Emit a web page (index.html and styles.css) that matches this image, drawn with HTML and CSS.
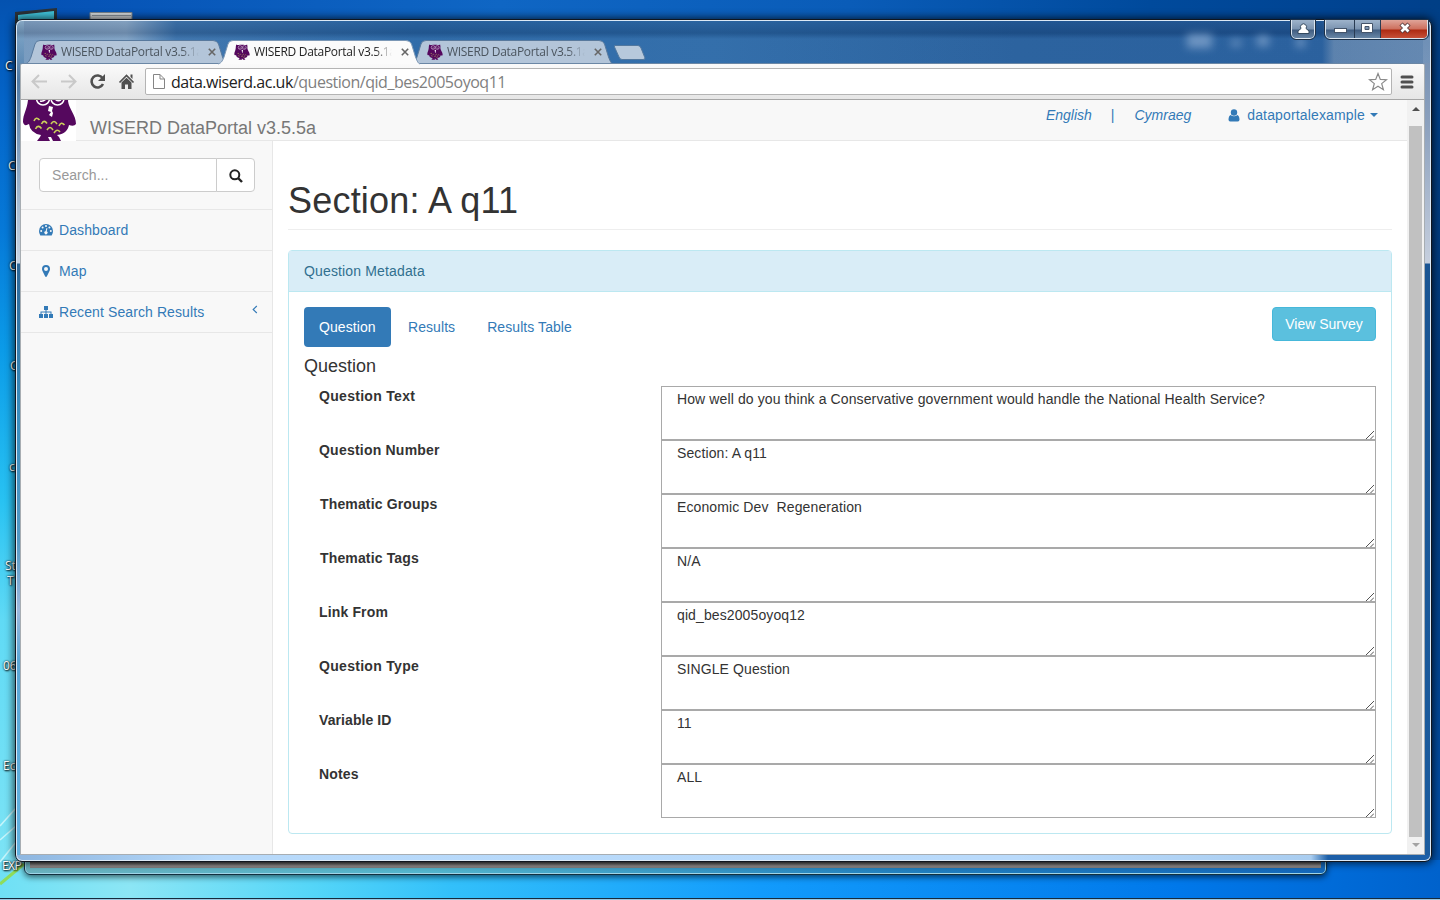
FILE: index.html
```html
<!DOCTYPE html>
<html lang="en">
<head>
<meta charset="utf-8">
<title>WISERD DataPortal</title>
<link rel="stylesheet" href="styles.css">
</head>
<body>
<svg width="0" height="0" class="defs">
  <symbol id="owl" viewBox="0 0 55 54">
    <path fill="#55085e" d="M8 1Q14 5 20 2H33Q40 5 45 1Q47 7 46 14C47 22 54 28 54 37Q52 40 47 38C46 43 43 47 35 48L37 50L39 54H31L29 50H26L28 54H15L18 50L19 48Q8 46 7 37Q2 40 1 35C1 27 5 23 6 13Q6 6 8 1Z"/>
    <g fill="none" stroke="#fff" stroke-width="1.5"><circle cx="21" cy="11.500" r="6.500"/><circle cx="35.500" cy="11.500" r="6.500"/><path d="M18 14Q21 15 24 12M33 12Q36 15 39 13"/></g>
    <path fill="#fff" d="M27 19L31 20L30 24L31 26L30 30L27 28L29 25L26 24Z"/>
    <path fill="none" stroke="#cbd05a" stroke-width="1.600" d="M12 34Q14 29 17.500 33M19.500 37Q22 32 25 36.500M29 37Q32 32 35 37M37 39Q39 34 42.500 38M13.500 42Q16 37 19.500 41.500M25 43Q28 38 31 43M32 46Q35 41 38 45"/>
  </symbol>
  <symbol id="close" viewBox="0 0 8 8"><path d="M.8.8L7.2 7.2M7.2.8L.8 7.2" stroke="currentColor" stroke-width="1.6"/></symbol>
</svg>
<div class="desktop">
  <svg class="wallpaper" width="1440" height="900">
    <path d="M0 884Q12 874 24 864" stroke="#8fdc5a" stroke-width="3" fill="none"/>
    <path d="M0 826L16 808M0 840L16 826M0 862L16 842" stroke="#c5f5fb" stroke-width="1.5"/>
    <path d="M15 12L57 8V24H15Z" fill="#2b3238"/><path d="M18 15L54 11V24H18Z" fill="#40c4dc"/>
    <path d="M90 12.500H132V24H90Z" fill="#d5d9dc" stroke="#77828c"/><path d="M92 15.500H131" stroke="#8c959e"/>
  </svg>
  <div class="icon-label l1">C</div><div class="icon-label l2">C</div><div class="icon-label l3">C</div><div class="icon-label l4">C</div>
  <div class="icon-label l5">c</div><div class="icon-label l6">St</div><div class="icon-label l7">T</div><div class="icon-label l8">06</div><div class="icon-label l9">Ec</div><div class="icon-label l10">EXP</div>
  <div class="back-window"><div class="back-client"></div></div>

  <div class="window">
    <div class="glow"></div>
    <div class="ghost g1"></div><div class="ghost g2"></div><div class="ghost g3"></div><div class="ghost g4"></div>
    <div class="caption user"><svg width="25" height="18"><path d="M7 14.5V12L10 9.5A3 3 0 1 1 15 9.5L18 12V14.5Z" fill="#fff" stroke="#34495f" stroke-width="1"/></svg></div>
    <div class="caption controls">
      <span class="cap"><svg width="28" height="18"><rect x="8.500" y="9.500" width="12" height="4" fill="#fff" stroke="#44546a"/></svg></span>
      <span class="cap"><svg width="25" height="18"><path d="M6.500 4.500h11v9h-11zM10 7.500v3h4v-3z" fill="#fff" fill-rule="evenodd" stroke="#44546a"/></svg></span>
      <span class="cap red"><svg width="47" height="18"><path d="M20 5L28 13M28 5L20 13" stroke="#55393c" stroke-width="4.500"/><path d="M20.500 5.500L27.500 12.500M27.500 5.500L20.500 12.500" stroke="#fff" stroke-width="2.800"/></svg></span>
    </div>
    <div class="tabs">
      <div class="tab"><svg class="shape" width="198" height="24"><path d="M-2 24C1 23 2 22 4 17L8 4Q9 .5 13 .5H186Q190 .5 191.500 4L195.500 17C197.500 22 198 23 200 24"/></svg><svg class="fav" width="16" height="16"><use href="#owl"/></svg><span class="tab-title">WISERD DataPortal v3.5.1a</span><svg class="x" width="8" height="8"><use href="#close"/></svg></div>
      <div class="tab active"><svg class="shape" width="198" height="24"><path d="M-2 24C1 23 2 22 4 17L8 4Q9 .5 13 .5H186Q190 .5 191.500 4L195.500 17C197.500 22 198 23 200 24"/></svg><svg class="fav" width="16" height="16"><use href="#owl"/></svg><span class="tab-title">WISERD DataPortal v3.5.1a</span><svg class="x" width="8" height="8"><use href="#close"/></svg></div>
      <div class="tab"><svg class="shape" width="198" height="24"><path d="M-2 24C1 23 2 22 4 17L8 4Q9 .5 13 .5H186Q190 .5 191.500 4L195.500 17C197.500 22 198 23 200 24"/></svg><svg class="fav" width="16" height="16"><use href="#owl"/></svg><span class="tab-title">WISERD DataPortal v3.5.1a</span><svg class="x" width="8" height="8"><use href="#close"/></svg></div>
      <svg class="newtab" width="32" height="16"><path d="M1 .5H24Q26 .5 27 3L31 13Q31 14.500 29 14.500H8Q6 14.500 5 12L.5 2Q0 .5 1 .5Z" fill="#b7c9dc" stroke="#52789f"/></svg>
    </div>
    <div class="client">
      <div class="toolbar">
        <svg class="nav-icons" width="124" height="36" fill="none">
          <path d="M26 17.500H12M18 11L11.500 17.500L18 24M40 17.500H54M48 11L54.500 17.500L48 24" stroke="#c9c9c9" stroke-width="2"/>
          <path d="M81.500 14A6 6 0 1 0 82 20" stroke="#505050" stroke-width="2.600"/><path d="M84 10V17H77Z" fill="#505050"/>
          <path d="M98.500 18.500L105.500 11.500L112.500 18.500" stroke="#505050" stroke-width="1.700"/><path d="M109.500 10.500H111.500V15L109.500 13Z" fill="#505050"/><path d="M100.500 18.500L105.500 13.700L110.500 18.500V25H107V20.500H104V25H100.500Z" fill="#505050"/>
        </svg>
        <div class="omnibox">
          <svg width="14" height="16" fill="#fff" stroke="#858585"><path d="M1.500.5H8L12.500 5V14.500H1.500ZM8 .5V5H12.500"/></svg>
          <span class="url">data.wiserd.ac.uk<i>/question/qid_bes2005oyoq11</i></span>
          <svg class="star" width="20" height="20" fill="#fff" stroke="#8a8a8a" stroke-width="1.200"><path d="M10 1.500L12.300 7.400L18.500 7.700L13.700 11.600L15.400 17.700L10 14.200L4.600 17.700L6.300 11.600L1.500 7.700L7.700 7.400Z"/></svg>
        </div>
        <svg class="menu" width="14" height="14" stroke="#505050" stroke-width="3" stroke-linecap="round"><path d="M2 2H12M2 7H12M2 12H12"/></svg>
      </div>
      <div class="viewport">
        <div class="page">
          <header class="navbar">
            <div class="logo"><svg width="55" height="54"><use href="#owl"/></svg></div>
            <span class="brand">WISERD DataPortal v3.5.5a</span>
            <nav class="toplinks">
              <em>English</em><span class="bar">|</span><em>Cymraeg</em>
              <svg class="person" width="12" height="13" fill="#337ab7"><circle cx="6" cy="3.500" r="3.200"/><path d="M2.500 6Q6 8.500 9.500 6Q11.500 7 11.500 11Q11 12.500 9.500 12.500H2.500Q1 12.500 .5 11Q.5 7 2.500 6Z"/></svg>
              <span class="account">dataportalexample</span><span class="caret"></span>
            </nav>
          </header>
          <div class="body">
            <aside class="sidebar">
              <div class="search"><div class="field">Search...</div><div class="go"><svg width="14" height="14" fill="none" stroke="#222"><circle cx="5.800" cy="5.800" r="4.500" stroke-width="2"/><path d="M9 9L13 13" stroke-width="2.400"/></svg></div></div>
              <a class="item"><svg width="14" height="14" viewBox="0 0 14 14"><path fill="#337ab7" d="M0 8A7 7 0 0 1 14 8Q14 10.500 12.700 12.500H1.300Q0 10.500 0 8Z"/><g fill="#f8f8f8"><circle cx="2.200" cy="8" r="1"/><circle cx="3.600" cy="4.600" r="1"/><circle cx="7" cy="3.100" r="1"/><circle cx="10.400" cy="4.600" r="1"/><circle cx="11.800" cy="8" r="1"/><path d="M7.500 5L8.400 5.300L7.700 8.300A1.600 1.600 0 1 1 6.600 8.200Z"/></g></svg><span>Dashboard</span></a>
              <a class="item"><svg width="14" height="14" viewBox="0 0 14 14"><path fill="#337ab7" fill-rule="evenodd" d="M7 1A4 4 0 0 1 11 5Q11 6 10.500 7L7.800 12.600Q7 13.500 6.200 12.600L3.500 7Q3 6 3 5A4 4 0 0 1 7 1ZM7 3A2 2 0 1 0 7 7A2 2 0 1 0 7 3Z"/></svg><span>Map</span></a>
              <a class="item"><svg width="14" height="14" viewBox="0 0 14 14"><path fill="#337ab7" d="M5 1H9V5H7.500V6.500H12.500V9H14V13H10V9H11.500V7.500H7.500V9H9V13H5V9H6.500V7.500H2.500V9H4V13H0V9H1.500V6.500H6.500V5H5Z"/></svg><span>Recent Search Results</span><svg class="chev" width="6" height="9" fill="none" stroke="#337ab7" stroke-width="1.200"><path d="M4.800 1L1.200 4.500L4.800 8"/></svg></a>
            </aside>
            <main class="main">
              <h1>Section: A q11</h1>
              <section class="panel">
                <div class="panel-heading">Question Metadata</div>
                <div class="panel-body">
                  <div class="pills"><span class="pill on">Question</span><span class="pill">Results</span><span class="pill">Results Table</span><span class="btn">View Survey</span></div>
                  <h4>Question</h4>
                  <div class="row"><b class="k1">Question Text</b><div class="area"><span>How well do you think a Conservative government would handle the National Health Service?</span><svg class="grip" width="8" height="8"><path d="M0 8L8 0M4.500 8L8 4.500"/></svg></div></div>
                  <div class="row"><b class="k2">Question Number</b><div class="area"><span>Section: A q11</span><svg class="grip" width="8" height="8"><path d="M0 8L8 0M4.500 8L8 4.500"/></svg></div></div>
                  <div class="row"><b class="k3">Thematic Groups</b><div class="area"><span>Economic Dev&nbsp; Regeneration</span><svg class="grip" width="8" height="8"><path d="M0 8L8 0M4.500 8L8 4.500"/></svg></div></div>
                  <div class="row"><b class="k3">Thematic Tags</b><div class="area"><span>N/A</span><svg class="grip" width="8" height="8"><path d="M0 8L8 0M4.500 8L8 4.500"/></svg></div></div>
                  <div class="row"><b>Link From</b><div class="area"><span>qid_bes2005oyoq12</span><svg class="grip" width="8" height="8"><path d="M0 8L8 0M4.500 8L8 4.500"/></svg></div></div>
                  <div class="row"><b class="k1">Question Type</b><div class="area"><span>SINGLE Question</span><svg class="grip" width="8" height="8"><path d="M0 8L8 0M4.500 8L8 4.500"/></svg></div></div>
                  <div class="row"><b class="k4">Variable ID</b><div class="area"><span>11</span><svg class="grip" width="8" height="8"><path d="M0 8L8 0M4.500 8L8 4.500"/></svg></div></div>
                  <div class="row"><b>Notes</b><div class="area"><span>ALL</span><svg class="grip" width="8" height="8"><path d="M0 8L8 0M4.500 8L8 4.500"/></svg></div></div>
                </div>
              </section>
            </main>
          </div>
        </div>
        <div class="scrollbar"><span class="up"></span><span class="thumb"></span><span class="down"></span></div>
      </div>
    </div>
  </div>
  <div class="taskbar"></div>
</div>
</body>
</html>
```
FILE: styles.css
```css
* { box-sizing: border-box; }
body { margin: 0; font: 14px/20px "Liberation Sans", Arial, sans-serif; color: #333; }
svg { display: block; flex: none; }
.defs { position: absolute; }
.desktop {
  position: relative; width: 1440px; height: 900px; overflow: hidden;
  background:
    linear-gradient(90deg, #6fe0f5 0, #8ce6f5 130px, #55d6f8 310px, #33c0fa 450px, #129bfc 760px, #0078ea 1180px, #0062cc 1440px) 0 860px / 1440px 40px no-repeat,
    linear-gradient(#0452b0 0, #0464c8 100px, #0679d8 230px, #0b9be8 350px, #28c2f2 500px, #60daf5 620px, #7ce3f5 860px) 0 0 / 30px 860px no-repeat,
    linear-gradient(#003f86 0, #003a7c 450px, #0052ae 900px) 1420px 0 / 20px 860px no-repeat,
    linear-gradient(90deg, #0450b4, #0f66c4 500px, #0a5cb8 850px, #004a9c 1150px, #00408c 1440px);
}
.wallpaper { position: absolute; left: 0; top: 0; }
.icon-label { position: absolute; font: 12px/14px "Open Sans", sans-serif; color: #fff; text-shadow: 1px 1px 2px #000, 0 0 2px #000; }
.l1 { left: 5px; top: 59px; } .l2 { left: 8px; top: 159px; } .l3 { left: 9px; top: 259px; } .l4 { left: 10px; top: 359px; }
.l5 { left: 9px; top: 460px; } .l6 { left: 5px; top: 559px; } .l7 { left: 7px; top: 574px; } .l8 { left: 3px; top: 659px; }
.l9 { left: 3px; top: 759px; } .l10 { left: 2px; top: 859px; letter-spacing: -.6px; }
.back-window {
  position: absolute; left: 24px; top: 830px; width: 1303px; height: 45px; padding: 0 5px 6px;
  border: 1px solid #12303f; border-radius: 0 0 6px 6px; box-shadow: inset 0 0 0 1px #9fd4e6, 0 2px 6px rgba(0,0,0,.6);
  background: linear-gradient(90deg, #6bb3c0, #54b7cf 400px, #207fc0 900px, #1469bd);
}
.back-client { height: 100%; background: linear-gradient(#4c4c4c 31px, #979292 35px, #837f7f); }
.window {
  position: absolute; left: 15px; top: 19px; width: 1417px; height: 843px; padding: 0 6px 6px;
  border: 1px solid #10161f; border-radius: 7px;
  box-shadow: inset 0 0 0 1px #dce9f6, 0 0 9px 1px rgba(0,0,0,.75);
  background:
    linear-gradient(90deg, #8db6e0, #b7d9fa 200px, #b9dafb 1000px, #a9cdf0 1295px, #1c5fa8 1312px) 0 835px / 1417px 7px no-repeat,
    linear-gradient(#8fb0cc 0, #4f7aa5 60px, #a9bed4 190px, #c8d4e2 243px, #2e6898 244px, #3b8fc0 400px, #5298c4 520px, #9db8dc 590px, #5aa6d6 640px, #63b2e0) 0 0 / 8px 843px no-repeat,
    linear-gradient(#6d8bb0 0, #8ba0bd 100px, #c6cfde 243px, #1a5593 244px, #1b5c9f) 1407px 0 / 8px 843px no-repeat,
    linear-gradient(90deg, #7e9cbd 0, #8aa7c5 110px, #3d72aa 160px, #2a65a3 400px, #2d68a5 700px, #245a97 1000px, #235896 1306px, #5d7fa8 1318px, #6887ad 1417px);
}
.glow { position: absolute; left: 1px; right: 1px; top: 1px; height: 42px; border-radius: 6px 6px 0 0; background: linear-gradient(rgba(0,30,70,.05), rgba(0,30,70,.22) 12px, rgba(90,150,205,.15) 18px, rgba(90,150,205,.15)); }
.ghost { position: absolute; background: #86a7cf; filter: blur(4px); opacity: .75; }
.g1 { left: 1171px; top: 14px; width: 25px; height: 14px; } .g2 { left: 1215px; top: 20px; width: 10px; height: 6px; }
.g3 { left: 1241px; top: 16px; width: 12px; height: 10px; } .g4 { left: 1280px; top: 18px; width: 9px; height: 9px; }
.caption { position: absolute; top: 0; display: flex; height: 19px; border: 1px solid #dbe5ef; border-top: 0; border-radius: 0 0 5px 5px; overflow: hidden; outline: 1px solid #1c3048; background: linear-gradient(#9eb3cb, #7a93b0 9px, #405c80 10px, #6886a6); }
.caption svg { margin-top: -1px; }
.user { left: 1275px; width: 24px; } .user svg { margin-left: -1px; }
.controls { left: 1309px; width: 103px; }
.cap { border-right: 1px solid #293b52; display: flex; justify-content: center; }
.cap.red { flex: 1; border: 0; background: linear-gradient(#dfa499, #cd6f5d 9px, #ad2a12 10px, #c65038); }
.tabs { height: 44px; padding: 20px 0 0 5px; display: flex; position: relative; }
.tab { position: relative; width: 193px; height: 24px; display: flex; align-items: center; padding: 0 0 1px 14px; font: 12px/16px "Open Sans", sans-serif; color: #4b555f; }
.shape { position: absolute; left: 0; top: 0; overflow: visible; fill: #b3c5d9; stroke: #58799d; }
.active { z-index: 2; color: #222; } .active .shape { fill: #fbfbfb; stroke: #7b97b5; }
.fav { position: relative; }
.tab-title { position: relative; margin-left: 4px; width: 140px; overflow: hidden; white-space: nowrap; letter-spacing: -.3px; -webkit-mask-image: linear-gradient(90deg, #000 120px, transparent 138px); }
.x { position: relative; margin-left: 7px; color: #666; }
.newtab { margin: 5px 0 0 8px; }
.client { height: 792px; background: #fff; border-radius: 3px 3px 0 0; border: 1px solid #8592a0; border-color: #6b87a5 #a7adb2 #a7adb2 #a7adb2; margin: -1px 0 0 -2px; position: relative; overflow: hidden; }
.toolbar { height: 36px; display: flex; align-items: center; background: linear-gradient(#fafafa, #e6e6e6); border-bottom: 1px solid #a6a6a6; }
.omnibox { width: 1247px; height: 27px; display: flex; align-items: center; background: #fff; border: 1px solid #b4b4b4; border-radius: 2px; padding-left: 6px; }
.url { font: 16px/20px "Open Sans", sans-serif; letter-spacing: -.48px; color: #222; margin-left: 5px; flex: 1; } .url i { font-style: normal; color: #808080; }
.star { margin-right: 3px; } .menu { margin-left: 8px; }
.viewport { display: flex; height: 755px; }
.page { flex: 1; display: flex; flex-direction: column; }
.navbar { display: flex; height: 41px; background: #f8f8f8; border-bottom: 1px solid #e7e7e7; }
.logo { width: 55px; height: 41px; overflow: hidden; background: #fff; padding-left: 1px; } .logo svg { margin-top: -13px; }
.brand { font-size: 18px; line-height: 20px; color: #777; margin: 18px 0 0 14px; }
.toplinks { margin-left: auto; margin-right: 29px; padding-top: 5px; display: flex; color: #337ab7; }
.account { letter-spacing: .15px; }
.bar { margin: 0 20px 0 19px; } .person { margin: 4px 7px 0 37px; }
.caret { border: 4px solid transparent; border-top-color: #337ab7; border-bottom: 0; margin: 8px 0 0 5px; height: 4px; }
.body { flex: 1; display: flex; }
.sidebar { width: 252px; background: #f8f8f8; border-right: 1px solid #e7e7e7; }
.search { height: 69px; padding: 17px 17px 0 18px; display: flex; border-bottom: 1px solid #e7e7e7; }
.field { width: 178px; height: 34px; border: 1px solid #ccc; border-radius: 4px 0 0 4px; background: #fff; color: #999; padding: 6px 12px; letter-spacing: .05px; }
.go { width: 39px; height: 34px; margin-left: -1px; border: 1px solid #ccc; border-radius: 0 4px 4px 0; background: #fff; padding: 10px 12px; }
.item { height: 41px; border-bottom: 1px solid #e7e7e7; padding: 0 14px 0 18px; display: flex; align-items: center; color: #337ab7; gap: 6px; letter-spacing: .1px; }
.chev { margin: -5px 0 0 auto; }
.main { flex: 1; padding: 40px 15px 0; }
h1 { font-size: 36px; line-height: 39px; font-weight: 400; letter-spacing: .2px; margin: 0 0 20px; padding-bottom: 9px; border-bottom: 1px solid #eee; }
.panel { height: 584px; border: 1px solid #bce8f1; border-radius: 4px; }
.panel-heading { height: 41px; padding: 10px 15px; background: #d9edf7; color: #31708f; border-bottom: 1px solid #bce8f1; letter-spacing: .15px; }
.panel-body { padding: 15px; }
.pills { display: flex; height: 40px; color: #337ab7; gap: 2px; }
.pill { padding: 10px 15px; letter-spacing: .07px; } .on { width: 87px; background: #337ab7; color: #fff; border-radius: 4px; }
.btn { margin-left: auto; width: 104px; height: 34px; border: 1px solid #46b8da; background: #5bc0de; border-radius: 4px; color: #fff; padding: 6px 0; text-align: center; }
h4 { margin: 9px 0 10px; font-size: 18px; line-height: 20px; font-weight: 400; }
.row { display: flex; height: 54px; padding-left: 15px; }
.row b { width: 342px; flex: none; letter-spacing: .15px; }
.row .k1 { letter-spacing: .3px; }
.row .k2 { letter-spacing: .22px; }
.row .k3 { padding-left: 1px; }
.row .k4 { letter-spacing: .08px; }
.area { position: relative; width: 715px; height: 54px; border: 1px solid #a9a9a9; padding: 2px 15px; letter-spacing: .11px; }
.grip { position: absolute; right: 1px; bottom: 0; stroke: #555; fill: none; }
.scrollbar { width: 17px; background: #f1f1f1; display: flex; flex-direction: column; align-items: center; }
.up { margin-top: 7px; border: 4px solid transparent; border-bottom-color: #505050; border-top: 0; }
.thumb { margin-top: 15px; width: 13px; height: 711px; background: #c1c1c1; }
.down { margin-top: 6px; border: 4px solid transparent; border-top-color: #a3a3a3; border-bottom: 0; }
.taskbar { position: absolute; left: 0; right: 0; top: 898px; height: 2px; background: linear-gradient(#152a3c 1px, #9cc6e0 1px); }
```
